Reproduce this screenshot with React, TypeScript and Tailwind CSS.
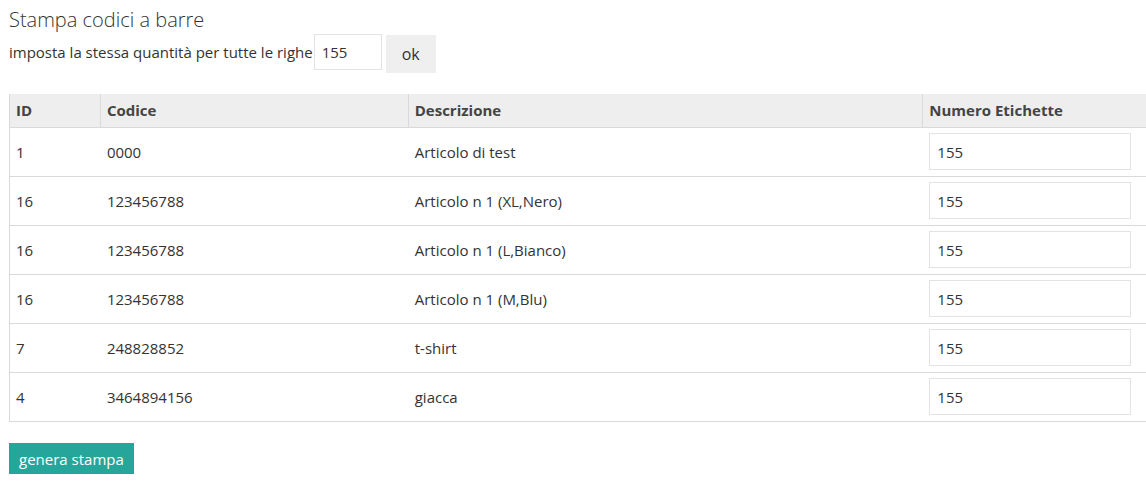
import React, { useState } from "react";

type Row = { id: number; code: string; description: string };

const rows: Row[] = [
  { id: 1, code: "0000", description: "Articolo di test" },
  { id: 16, code: "123456788", description: "Articolo n 1 (XL,Nero)" },
  { id: 16, code: "123456788", description: "Articolo n 1 (L,Bianco)" },
  { id: 16, code: "123456788", description: "Articolo n 1 (M,Blu)" },
  { id: 7, code: "248828852", description: "t-shirt" },
  { id: 4, code: "3464894156", description: "giacca" },
];

export default function App() {
  const [quantity, setQuantity] = useState("155");
  const [labels, setLabels] = useState<string[]>(rows.map(() => "155"));

  return (
    <main className="bg-white pl-[9px] pt-2 font-['Open_Sans',sans-serif] text-[15px] leading-5 text-[#333333]">
      <h1 className="text-[20px] font-light leading-6">Stampa codici a barre</h1>
      <div className="flex items-start pt-[2px]">
        <label htmlFor="quantity" className="leading-9">
          imposta la stessa quantità per tutte le righe
        </label>
        <input
          id="quantity"
          type="text"
          value={quantity}
          onChange={(e) => setQuantity(e.target.value)}
          className="ml-px h-9 w-[68px] border border-[#e3e3e3] px-[7px] outline-none"
        />
        <button
          type="button"
          onClick={() => setLabels(rows.map(() => quantity))}
          className="ml-1 mt-px h-[38px] w-[50px] bg-[#efefef] text-[16px]"
        >
          ok
        </button>
      </div>
      <table className="mt-[21px] w-full table-fixed border-separate border-spacing-0 border-l border-[#d9d9d9] text-left">
        <thead>
          <tr className="h-[34px] bg-[#eeeeee] text-[#444444]">
            <th className="w-[8%] border-b border-r border-[#d9d9d9] px-[6px] pb-[2px]">ID</th>
            <th className="w-[27.1%] border-b border-r border-[#d9d9d9] px-[6px] pb-[2px]">Codice</th>
            <th className="w-[45.3%] border-b border-r border-[#d9d9d9] px-[6px] pb-[2px]">Descrizione</th>
            <th className="border-b border-[#d9d9d9] px-[6px] pb-[2px]">Numero Etichette</th>
          </tr>
        </thead>
        <tbody>
          {rows.map((row, i) => (
            <tr key={i}>
              <td className="border-b border-[#d9d9d9] px-[6px]">{row.id}</td>
              <td className="border-b border-[#d9d9d9] px-[6px]">{row.code}</td>
              <td className="border-b border-[#d9d9d9] px-[6px]">{row.description}</td>
              <td className="border-b border-[#d9d9d9] pb-[6px] pl-[6px] pr-[15px] pt-[5px]">
                <input
                  type="text"
                  aria-label={`Numero Etichette ${row.description}`}
                  value={labels[i]}
                  onChange={(e) =>
                    setLabels(labels.map((v, n) => (n === i ? e.target.value : v)))
                  }
                  className="block h-[37px] w-full border border-[#e3e3e3] px-[7px] outline-none"
                />
              </td>
            </tr>
          ))}
        </tbody>
      </table>
      <button type="button" className="mt-[21px] h-[31px] bg-[#26a69a] px-[10px] text-white">
        genera stampa
      </button>
    </main>
  );
}
